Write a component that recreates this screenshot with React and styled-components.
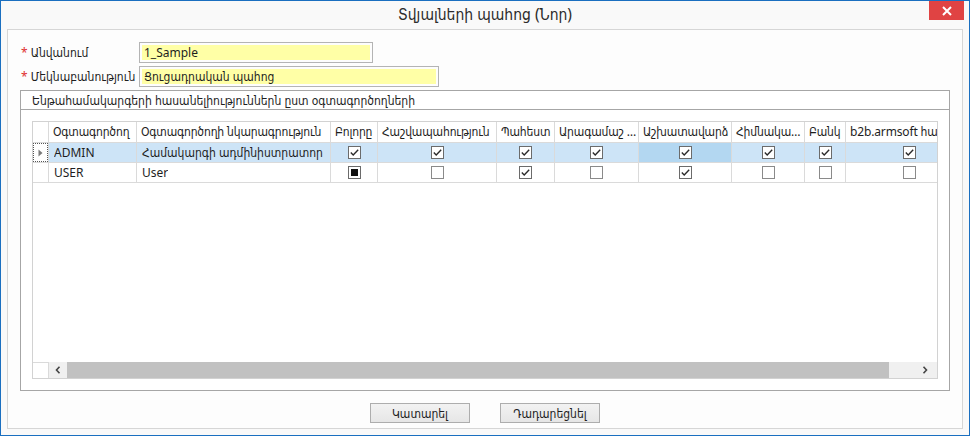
import React from "react";
import styled, { createGlobalStyle } from "styled-components";

const Global = createGlobalStyle`
  html, body { margin: 0; padding: 0; background: #ffffff; }
  * { box-sizing: border-box; }
  body { font-family: "Noto Sans", "DejaVu Sans Condensed", "DejaVu Sans", sans-serif; font-size: 12px; color: #1e1e1e; }
`;

const COLS = "16px 88px 194px 47px 119px 58px 84px 93px 73px 41px 128px";

const Window = styled.div`
  width: 970px;
  height: 436px;
  border: 1px solid #1a6fc0;
  background: #f9f9f9;
  display: flex;
  flex-direction: column;
  overflow: hidden;
`;

const TitleBar = styled.div`
  position: relative;
  height: 28px;
  display: flex;
  align-items: center;
  justify-content: center;
  font-size: 15.5px;
  color: #2b2b2b;
  padding-bottom: 2px;
`;

const CloseButton = styled.div`
  position: absolute;
  top: 0;
  right: 5px;
  width: 35px;
  height: 19px;
  background: #e04343;
  display: flex;
  align-items: center;
  justify-content: center;
`;

const Panel = styled.div`
  flex: 1;
  margin: 0 6px 6px 6px;
  border: 1px solid #d6d6d6;
  background: #fdfdfd;
  padding: 12px 12px 0 12px;
  display: flex;
  flex-direction: column;
`;

const FormRow = styled.div`
  display: flex;
  align-items: center;
  height: 21px;
  margin-bottom: ${(p) => p.$gap || 3}px;
`;

const Label = styled.div`
  width: 119px;
  padding-left: 1px;
  white-space: nowrap;
  color: #1e1e1e;
  display: flex;
  align-items: center;
  gap: 3px;
`;

const Star = styled.span`
  color: #e03030;
  font-size: 12px;
`;

const Input = styled.div`
  width: ${(p) => p.$w}px;
  height: ${(p) => p.$h || 21}px;
  border: 1px solid #b4b4b4;
  padding: 2px;
  background: #fdfdfd;
  display: flex;
`;

const InputFill = styled.div`
  flex: 1;
  background: #ffffa6;
  padding-left: 2px;
  display: flex;
  align-items: center;
  white-space: nowrap;
`;

const GroupBox = styled.div`
  width: 930px;
  height: 301px;
  border: 1px solid #a6a6a6;
  background: #ffffff;
  display: flex;
  flex-direction: column;
`;

const GroupHeader = styled.div`
  height: 19px;
  border-bottom: 1px solid #a6a6a6;
  padding-left: 11px;
  display: flex;
  align-items: center;
  white-space: nowrap;
`;

const GroupBody = styled.div`
  flex: 1;
  padding: 11px;
  display: flex;
`;

const Grid = styled.div`
  flex: 1;
  border: 1px solid #d2d2d2;
  display: flex;
  flex-direction: column;
  overflow: hidden;
  background: #fff;
`;

const Row = styled.div`
  display: grid;
  grid-template-columns: ${COLS};
  height: ${(p) => p.$h}px;
  flex: none;
`;

const Cell = styled.div`
  border-right: 1px solid #dadada;
  border-bottom: 1px solid #dadada;
  background: ${(p) => (p.$focus ? "#b3d7f1" : p.$sel ? "#cde4f7" : "#ffffff")};
  display: flex;
  align-items: center;
  justify-content: ${(p) => (p.$center ? "center" : "flex-start")};
  padding: ${(p) => (p.$center ? "0" : "0 4px 0 5px")};
  white-space: nowrap;
  overflow: hidden;
  min-width: 0;
`;

const HeadCell = styled.div`
  border-right: 1px solid #dadada;
  border-bottom: 1px solid #dadada;
  padding: 0 1px 0 4px;
  line-height: 20px;
  letter-spacing: -0.15px;
  white-space: nowrap;
  overflow: hidden;
  text-overflow: ${(p) => (p.$clip ? "clip" : "ellipsis")};
  min-width: 0;
`;

const CellText = styled.span`
  overflow: hidden;
  text-overflow: ellipsis;
  white-space: nowrap;
`;

const Selector = styled.div`
  border-right: 1px solid #dadada;
  border-bottom: 1px solid #dadada;
  background: #fff;
  display: flex;
  align-items: center;
  justify-content: center;
`;

const FocusBox = styled.div`
  width: 100%;
  height: 100%;
  border: 1px dotted #555;
  display: flex;
  align-items: center;
  justify-content: center;
`;

const Filler = styled.div`
  flex: 1;
`;

const ScrollBar = styled.div`
  height: 16px;
  flex: none;
  display: flex;
`;

const Corner = styled.div`
  width: 16px;
  border-top: 1px solid #dadada;
  border-right: 1px solid #dadada;
  background: #fff;
`;

const ArrowBtn = styled.div`
  width: ${(p) => p.$w}px;
  background: #f0f0f0;
  display: flex;
  align-items: center;
  justify-content: center;
  flex: none;
`;

const Thumb = styled.div`
  flex: 1;
  background: #c1c1c1;
`;

const Footer = styled.div`
  flex: 1;
  display: flex;
  justify-content: center;
  align-items: flex-start;
  padding-top: 12px;
  gap: 30px;
`;

const Button = styled.div`
  width: 100px;
  height: 20px;
  border: 1px solid #adadad;
  background: linear-gradient(#f2f2f2, #e6e6e6);
  display: flex;
  align-items: center;
  justify-content: center;
  color: #1e1e1e;
`;

const Check = ({ v }) => (
  <svg width="13" height="13" viewBox="0 0 13 13">
    <rect x="0.5" y="0.5" width="12" height="12" fill="#fff" stroke={v ? "#6b6b6b" : "#8a8a8a"} />
    {v === 1 && (
      <path d="M2.8 6.6 L5.2 9 L10.2 3.8" fill="none" stroke="#2a2a2a" strokeWidth="1.4" />
    )}
    {v === 2 && <rect x="3" y="3" width="7" height="7" fill="#111" />}
  </svg>
);

const headers = [
  "Օգտագործող",
  "Օգտագործողի նկարագրություն",
  "Բոլորը",
  "Հաշվապահություն",
  "Պահեստ",
  "Արագամաշ առարկաներ",
  "Աշխատավարձ",
  "Հիմնական միջոցներ",
  "Բանկ",
  "b2b.armsoft հարթակ",
];

const rows = [
  { user: "ADMIN", desc: "Համակարգի ադմինիստրատոր", checks: [1, 1, 1, 1, 1, 1, 1, 1], sel: true },
  { user: "USER", desc: "User", checks: [2, 0, 1, 0, 1, 0, 0, 0], sel: false },
];

export default function App() {
  return (
    <>
      <Global />
      <Window>
        <TitleBar>
          Տվյալների պահոց (Նոր)
          <CloseButton>
            <svg width="10" height="10" viewBox="0 0 10 10">
              <path d="M1 1 L9 9 M9 1 L1 9" stroke="#fff" strokeWidth="2" />
            </svg>
          </CloseButton>
        </TitleBar>
        <Panel>
          <FormRow>
            <Label>
              <Star>*</Star>Անվանում
            </Label>
            <Input $w={234}>
              <InputFill>1_Sample</InputFill>
            </Input>
          </FormRow>
          <FormRow $gap={3}>
            <Label>
              <Star>*</Star>Մեկնաբանություն
            </Label>
            <Input $w={300}>
              <InputFill>Ցուցադրական պահոց</InputFill>
            </Input>
          </FormRow>
          <GroupBox>
            <GroupHeader>Ենթահամակարգերի հասանելիություններն ըստ օգտագործողների</GroupHeader>
            <GroupBody>
              <Grid>
                <Row $h={21}>
                  <Selector />
                  {headers.map((h, i) => (
                    <HeadCell key={i} $clip={i === headers.length - 1}>
                      {h}
                    </HeadCell>
                  ))}
                </Row>
                {rows.map((r, ri) => (
                  <Row $h={20} key={ri}>
                    <Selector>
                      {r.sel ? (
                        <FocusBox>
                          <svg width="5" height="8" viewBox="0 0 5 8">
                            <path d="M0.5 0.5 L4.5 4 L0.5 7.5 Z" fill="#7a7a7a" />
                          </svg>
                        </FocusBox>
                      ) : null}
                    </Selector>
                    <Cell $sel={r.sel}>
                      <CellText>{r.user}</CellText>
                    </Cell>
                    <Cell $sel={r.sel}>
                      <CellText>{r.desc}</CellText>
                    </Cell>
                    {r.checks.map((c, ci) => (
                      <Cell key={ci} $center $sel={r.sel} $focus={r.sel && ci === 4}>
                        <Check v={c} />
                      </Cell>
                    ))}
                  </Row>
                ))}
                <Filler />
                <ScrollBar>
                  <Corner />
                  <ArrowBtn $w={18}>
                    <svg width="6" height="8" viewBox="0 0 6 8">
                      <path d="M4.5 0.8 L1.5 4 L4.5 7.2" fill="none" stroke="#444" strokeWidth="1.6" />
                    </svg>
                  </ArrowBtn>
                  <Thumb />
                  <ArrowBtn $w={48}>
                    <svg width="34" height="8" viewBox="0 0 34 8">
                      <path d="M27.5 0.8 L30.5 4 L27.5 7.2" fill="none" stroke="#444" strokeWidth="1.6" />
                    </svg>
                  </ArrowBtn>
                </ScrollBar>
              </Grid>
            </GroupBody>
          </GroupBox>
          <Footer>
            <Button>Կատարել</Button>
            <Button>Դադարեցնել</Button>
          </Footer>
        </Panel>
      </Window>
    </>
  );
}
